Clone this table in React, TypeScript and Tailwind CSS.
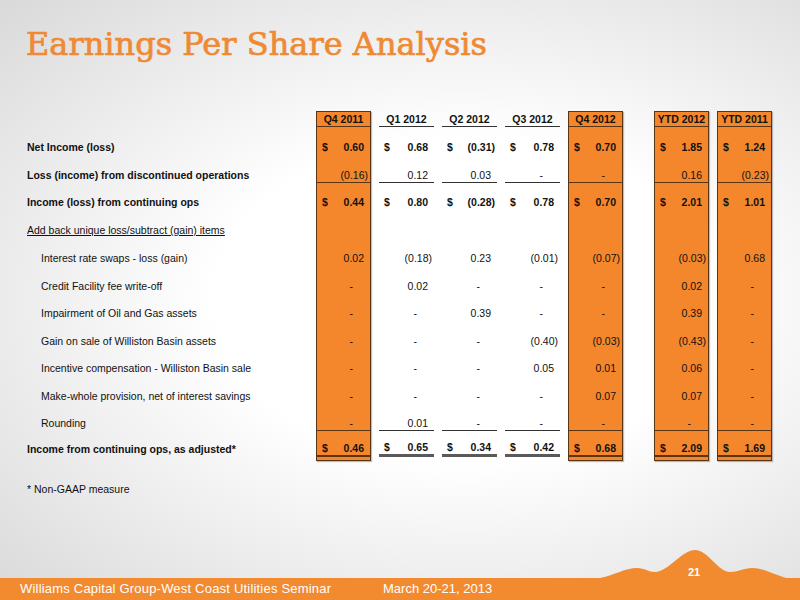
import React from 'react';

type Col = { h: string; box: boolean; ml: string; v: string[] };

const rows = [
  { label: 'Net Income (loss)', bold: true, indent: false, h: 'h-[27px]' },
  { label: 'Loss (income) from discontinued operations', bold: true, indent: false, h: 'h-[29px]', line: true },
  { label: 'Income (loss) from continuing ops', bold: true, indent: false, h: 'h-[26px]' },
  { label: 'Add back unique loss/subtract (gain) items', bold: false, indent: false, h: 'h-[28px]', under: true },
  { label: 'Interest rate swaps - loss (gain)', bold: false, indent: true, h: 'h-[28px]' },
  { label: 'Credit Facility fee write-off', bold: false, indent: true, h: 'h-[28px]' },
  { label: 'Impairment of Oil and Gas assets', bold: false, indent: true, h: 'h-[27px]' },
  { label: 'Gain on sale of Williston Basin assets', bold: false, indent: true, h: 'h-[28px]' },
  { label: 'Incentive compensation - Williston Basin sale', bold: false, indent: true, h: 'h-[27px]' },
  { label: 'Make-whole provision, net of interest savings', bold: false, indent: true, h: 'h-[28px]' },
  { label: 'Rounding', bold: false, indent: true, h: 'h-[28px]', line: true },
  { label: 'Income from continuing ops, as adjusted*', bold: true, indent: false, h: 'h-[26px]', total: true },
];

const dollarRows = [0, 2, 11];

const cols: Col[] = [
  { h: 'Q4 2011', box: true, ml: 'ml-0', v: ['0.60', '(0.16)', '0.44', '', '0.02', '-', '-', '-', '-', '-', '-', '0.46'] },
  { h: 'Q1 2012', box: false, ml: 'ml-[8px]', v: ['0.68', '0.12', '0.80', '', '(0.18)', '0.02', '-', '-', '-', '-', '0.01', '0.65'] },
  { h: 'Q2 2012', box: false, ml: 'ml-[8px]', v: ['(0.31)', '0.03', '(0.28)', '', '0.23', '-', '0.39', '-', '-', '-', '-', '0.34'] },
  { h: 'Q3 2012', box: false, ml: 'ml-[8px]', v: ['0.78', '-', '0.78', '', '(0.01)', '-', '-', '(0.40)', '0.05', '-', '-', '0.42'] },
  { h: 'Q4 2012', box: true, ml: 'ml-[8px]', v: ['0.70', '-', '0.70', '', '(0.07)', '-', '-', '(0.03)', '0.01', '0.07', '-', '0.68'] },
  { h: 'YTD 2012', box: true, ml: 'ml-[31px]', v: ['1.85', '0.16', '2.01', '', '(0.03)', '0.02', '0.39', '(0.43)', '0.06', '0.07', '-', '2.09'] },
  { h: 'YTD 2011', box: true, ml: 'ml-[8px]', v: ['1.24', '(0.23)', '1.01', '', '0.68', '-', '-', '-', '-', '-', '-', '1.69'] },
];

function Value({ v }: { v: string }) {
  if (v === '') return null;
  if (v === '-') return <span className="pr-[17px]">-</span>;
  if (v.endsWith(')')) return <span className="pr-[2px]">{v}</span>;
  return <span className="pr-[6px]">{v}</span>;
}

function DataCol({ c }: { c: Col }) {
  const lineColor = c.box ? 'border-[#5a3513]' : 'border-[#333]';
  return (
    <div
      className={`${c.ml} w-[55px] flex flex-col ${
        c.box ? 'bg-[#f4862c] border border-[#5a3513] shadow-[1px_1px_1px_rgba(0,0,0,0.25)]' : 'pt-[1px]'
      }`}
    >
      <div className={`h-[15px] border-b ${lineColor} flex items-center justify-center font-bold`}>{c.h}</div>
      {rows.map((r, i) => {
        const bold = r.bold && i !== 1;
        const border = r.total
          ? c.box
            ? 'border-b-2 border-[#5a3513]'
            : 'border-b-[3px] border-[#5a5a5a]'
          : r.line
          ? `border-b ${lineColor}`
          : '';
        return (
          <div
            key={i}
            className={`${r.h} ${border} flex items-end justify-between ${bold ? 'font-bold' : ''}`}
          >
            <span className="pl-[5px]">{dollarRows.includes(i) ? '$' : ''}</span>
            <Value v={c.v[i]} />
          </div>
        );
      })}
      {c.box && <div className="h-[3px]" />}
    </div>
  );
}

export default function App() {
  return (
    <div className="relative w-[800px] h-[600px] overflow-hidden flex flex-col font-['Liberation_Sans',Arial,sans-serif] text-[#111] bg-[radial-gradient(ellipse_at_58%_50%,#ffffff_38%,#d9d9d9_100%)]">
      <div className="pt-[28px] pl-[26px] font-['DejaVu_Serif',serif] text-[32px] leading-[32px] text-[#ef8a34] [-webkit-text-stroke:0.7px_#ef8a34]">
        Earnings Per Share Analysis
      </div>

      <div className="mt-[51px] pl-[27px] flex text-[10.5px] leading-[14px]">
        <div className="w-[289px] flex flex-col pt-[1px]">
          <div className="h-[15px]" />
          {rows.map((r, i) => (
            <div
              key={i}
              className={`${r.h} flex items-end ${r.indent ? 'pl-[14px]' : ''} ${r.bold ? 'font-bold' : ''} ${
                r.line || r.total ? 'pb-[1px]' : ''
              }`}
            >
              <span className={r.under ? 'underline' : ''}>{r.label}</span>
            </div>
          ))}
        </div>
        {cols.map((c) => (
          <DataCol key={c.h} c={c} />
        ))}
      </div>

      <div className="mt-[21px] pl-[27px] text-[10.5px] leading-[14px]">* Non-GAAP measure</div>

      <div className="flex-1" />

      <div className="h-[22px] bg-[#f28a30] flex items-center text-white text-[13px] leading-[16px] pl-[20px]">
        <span className="w-[363px] tracking-[0.2px]">Williams Capital Group-West Coast Utilities Seminar</span>
        <span>March 20-21, 2013</span>
      </div>

      <svg className="absolute left-[590px] top-[540px]" width="210" height="60" viewBox="0 0 210 60">
        <path
          d="M0,38 L10,38 C25,35 35,28 47,28 C55,28 58,32 65,32 C78,32 92,10 105,10 C118,10 128,32 140,32 C148,32 154,28 162,28 C175,28 185,36 210,42 L210,60 L0,60 Z"
          fill="#f28a30"
        />
      </svg>
      <div className="absolute left-[688px] top-[565px] text-white font-bold text-[11px] leading-[14px]">21</div>
    </div>
  );
}
